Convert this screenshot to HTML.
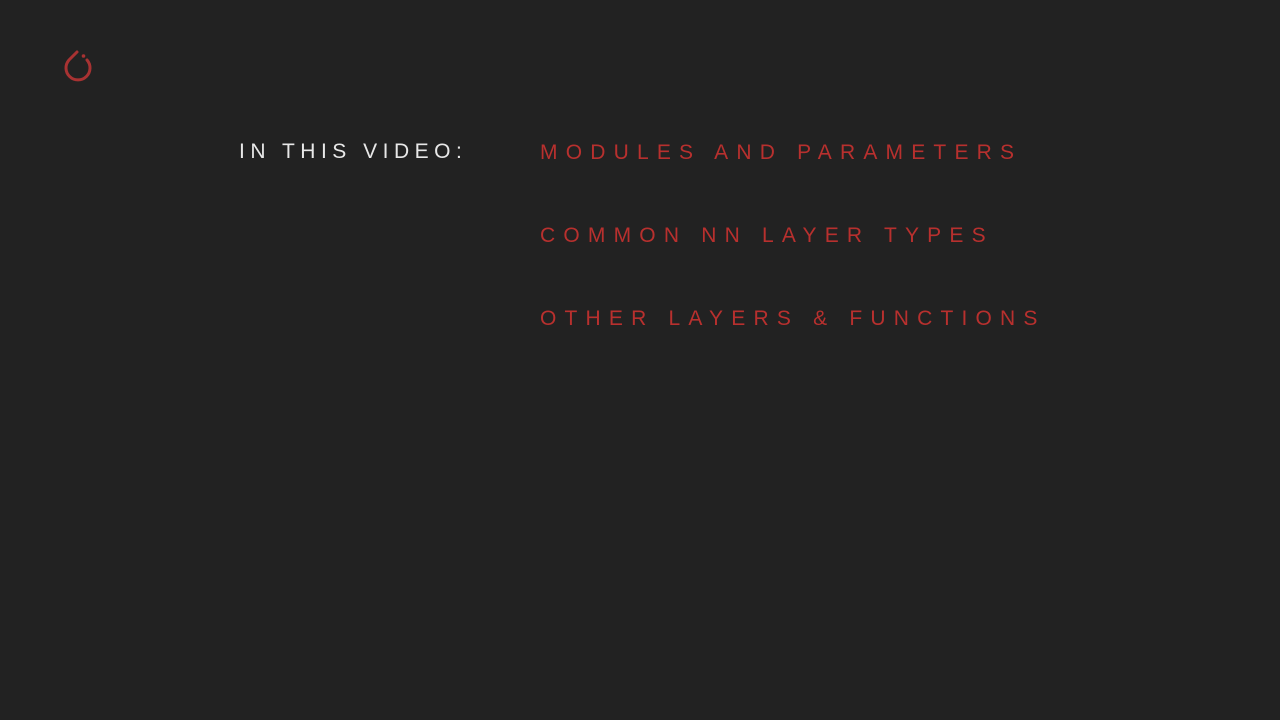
<!DOCTYPE html>
<html><head><style>
html,body{margin:0;padding:0;background:#222222;width:1280px;height:720px;overflow:hidden}
.t{position:absolute;font-family:"Liberation Sans",sans-serif;font-size:21px;letter-spacing:8.2px;white-space:nowrap;line-height:1}
.w{color:#e8e8e8;letter-spacing:5.5px}
.r{color:#b8302e}
</style></head><body>
<svg style="position:absolute;left:59px;top:46px" width="40" height="40" viewBox="0 0 40 40">
<path d="M18 6 L10 14 A12 12 0 1 0 28 14" fill="none" stroke="#a83232" stroke-width="3" stroke-linecap="round"/>
<circle cx="24.5" cy="10" r="1.8" fill="#a83232"/>
</svg>
<div class="t w" style="left:239px;top:141px">IN THIS VIDEO:</div>
<div class="t r" style="left:540px;top:142px">MODULES AND PARAMETERS</div>
<div class="t r" style="left:540px;top:225px">COMMON NN LAYER TYPES</div>
<div class="t r" style="left:540px;top:308px">OTHER LAYERS &amp; FUNCTIONS</div>
</body></html>
